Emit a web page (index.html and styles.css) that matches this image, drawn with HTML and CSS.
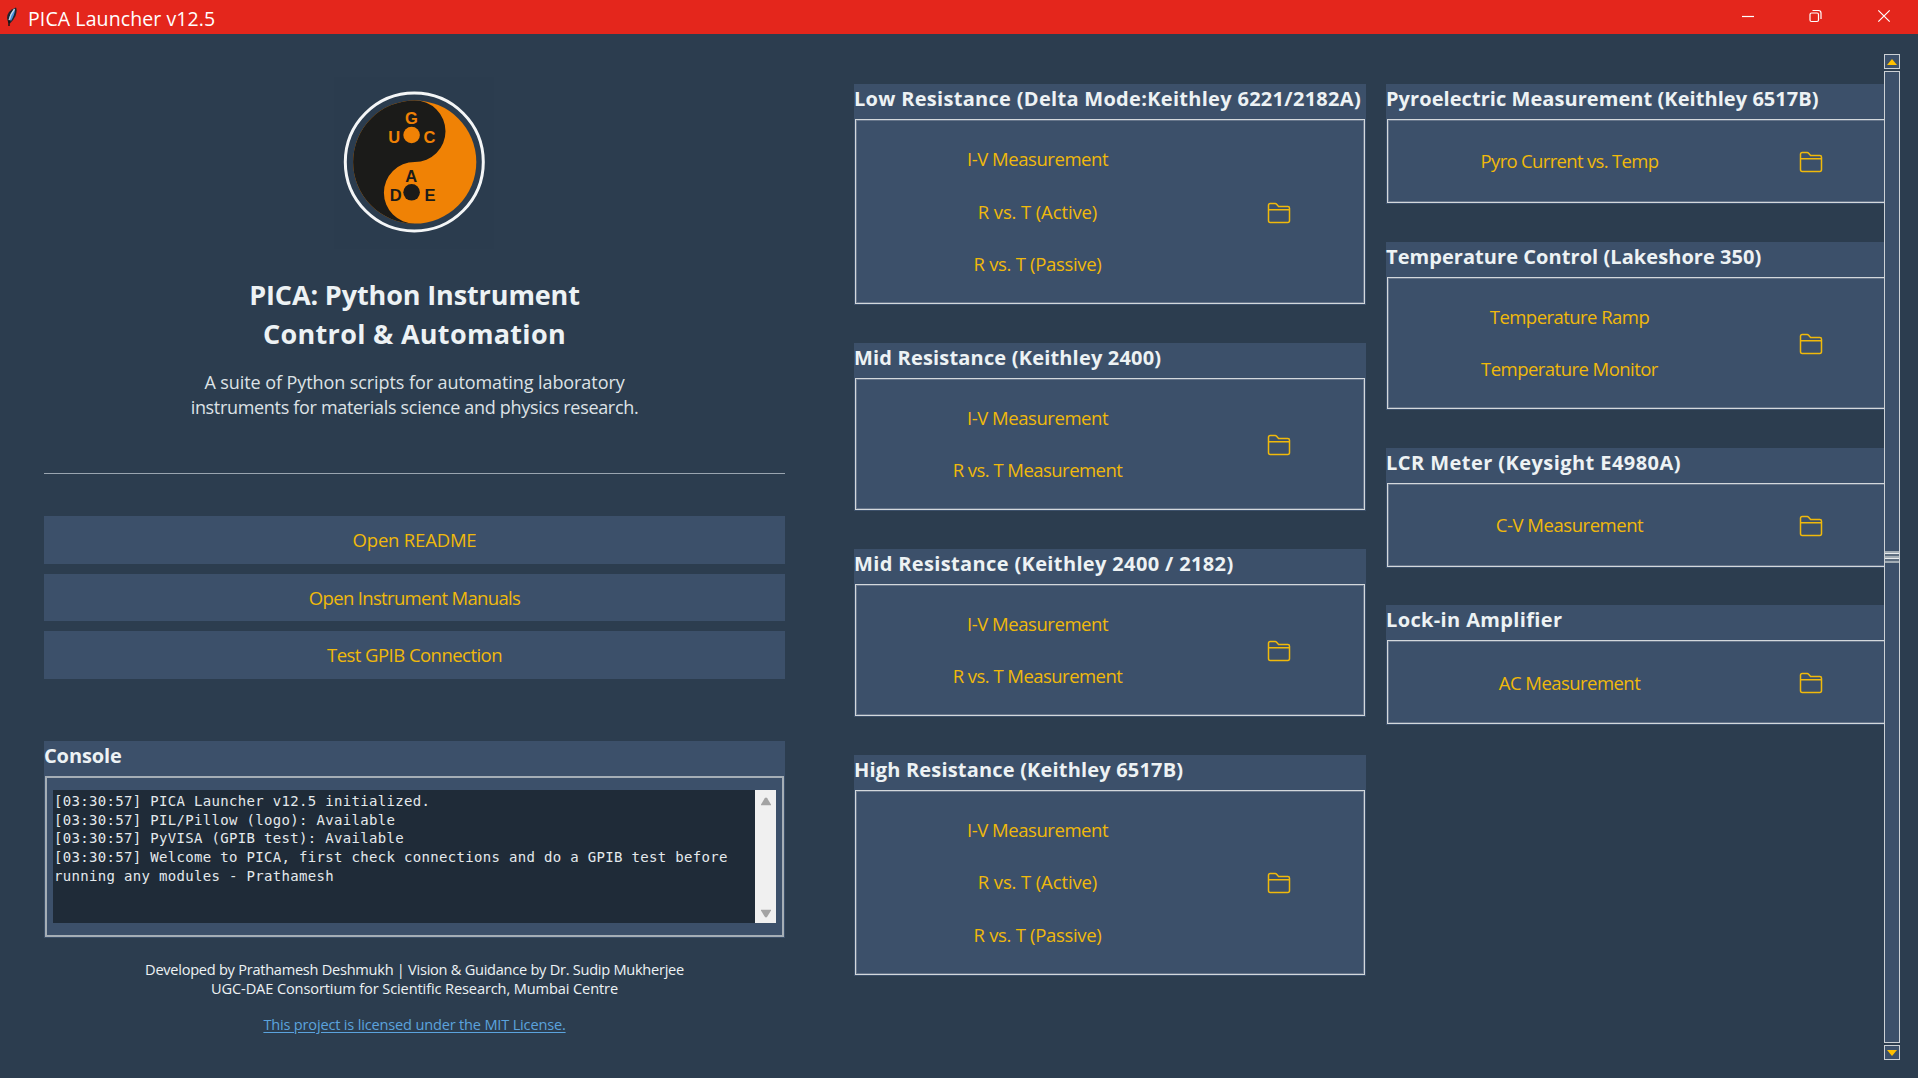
FILE: index.html
```html
<!DOCTYPE html>
<html lang="en">
<head>
<meta charset="utf-8">
<title>PICA Launcher v12.5</title>
<link rel="stylesheet" href="styles.css">
</head>
<body>
<svg class="symbols" width="0" height="0" aria-hidden="true">
  <symbol id="folder" viewBox="0 0 24 22">
    <path d="M1.5 18.5V3.2Q1.5 1.5 3.2 1.5H8.2Q9 1.5 9.6 2.2L11.6 4.5H20.8Q22.5 4.5 22.5 6.2V18.5Q22.5 20.5 20.8 20.5H3.2Q1.5 20.5 1.5 18.5ZM1.5 7.8H22.5" fill="none" stroke="currentColor" stroke-width="1.5"/>
  </symbol>
</svg>
<header class="titlebar">
  <svg class="feather" width="12" height="20" viewBox="0 0 12 20"><path d="M10 .5Q11.500 3 9.500 9Q7.500 13 4 16.500L2.500 16Q-.5 10 3 5Q6 1.500 10 .5Z" fill="#1d2530"/><path d="M9 2Q9 7 5 14L3.500 12Q3 7 9 2Z" fill="#4a90d9"/><path d="M8.500 2Q4.500 7 3 13.500" fill="none" stroke="#c4d8e8" stroke-width="1.300"/><path d="M3 13V19" stroke="#111" stroke-width="1.400"/></svg>
  <h1 class="app-name">PICA Launcher v12.5</h1>
  <div class="window-controls">
    <svg width="14" height="14" viewBox="0 0 14 14"><path d="M1 7.500H13"/></svg>
    <svg width="14" height="14" viewBox="0 0 14 14"><rect x="1" y="4" width="8.500" height="8.500" rx="1.500"/><path d="M3.500 1.500H9.500Q12 1.500 12 4V10"/></svg>
    <svg width="14" height="14" viewBox="0 0 14 14"><path d="M1.300 1.300L12.700 12.700M12.700 1.300L1.300 12.700"/></svg>
  </div>
</header>
<main class="workspace">
  <section class="info">
    <svg class="logo" width="160" height="172" viewBox="0 0 160 172">
      <rect width="160" height="172" fill="#2b3c4e"/>
      <circle cx="80.300" cy="85" r="69" fill="none" stroke="#f4f6f7" stroke-width="3"/>
      <circle cx="80.700" cy="85" r="61.600" fill="#f08205"/>
      <path d="M80.700 23.400A30.800 30.800 0 0 1 80.700 85A30.800 30.800 0 0 0 80.700 146.600A61.600 61.600 0 0 1 80.700 23.400Z" fill="#1b1b19"/>
      <circle cx="77.600" cy="58" r="8.300" fill="#f08205"/>
      <circle cx="77.600" cy="115.300" r="8.300" fill="#1b1b19"/>
      <g class="logo-text" fill="#f08205"><text x="77.300" y="46.500">G</text><text x="60.300" y="65.500">U</text><text x="95.500" y="65.500">C</text></g>
      <g class="logo-text" fill="#1b1b19"><text x="77.300" y="105">A</text><text x="61.700" y="123.500">D</text><text x="96" y="123.500">E</text></g>
    </svg>
    <h2 class="title"><span class="tight-1">PICA: Python Instrument</span><br><span class="wide-3">Control &amp; Automation</span></h2>
    <p class="tagline"><span class="tight-0">A suite of Python scripts for automating laboratory</span><br><span class="tight-3">instruments for materials science and physics research.</span></p>
    <hr class="divider">
    <nav class="actions">
      <button class="action tight-2">Open README</button>
      <button class="action tight-6">Open Instrument Manuals</button>
      <button class="action tight-5">Test GPIB Connection</button>
    </nav>
    <section class="group console">
      <h3 class="group-title tight-1">Console</h3>
      <div class="console-frame">
        <pre class="log">[03:30:57] PICA Launcher v12.5 initialized.
[03:30:57] PIL/Pillow (logo): Available
[03:30:57] PyVISA (GPIB test): Available
[03:30:57] Welcome to PICA, first check connections and do a GPIB test before
running any modules - Prathamesh</pre>
        <div class="log-scroll">
          <svg width="12" height="9" viewBox="0 0 12 9"><path d="M4.800 1.300Q6-.2 7.200 1.300L11 7.500V8.300H1V7.500Z"/></svg>
          <svg width="12" height="9" viewBox="0 0 12 9"><path d="M4.800 7.700Q6 9.200 7.200 7.700L11 1.500V.7H1V1.500Z"/></svg>
        </div>
      </div>
    </section>
    <footer class="credits">
      <p class="credit"><span class="tight-2b">Developed by Prathamesh Deshmukh | Vision &amp; Guidance by Dr. Sudip Mukherjee</span><br><span class="tight-1">UGC-DAE Consortium for Scientific Research, Mumbai Centre</span></p>
      <a class="license tight-2" href="#">This project is licensed under the MIT License.</a>
    </footer>
  </section>
  <section class="suites">
    <div class="column">
      <section class="group triple"><h3 class="group-title wide-3">Low Resistance (Delta Mode:Keithley 6221/2182A)</h3>
        <div class="frame"><div class="items"><span class="tight-4">I-V Measurement</span><span class="tight-1">R vs. T (Active)</span><span class="tight-3">R vs. T (Passive)</span></div><svg class="folder"><use href="#folder"/></svg></div></section>
      <section class="group double"><h3 class="group-title wide-2">Mid Resistance (Keithley 2400)</h3>
        <div class="frame"><div class="items"><span class="tight-4">I-V Measurement</span><span class="tight-5">R vs. T Measurement</span></div><svg class="folder"><use href="#folder"/></svg></div></section>
      <section class="group double"><h3 class="group-title wide-4">Mid Resistance (Keithley 2400 / 2182)</h3>
        <div class="frame"><div class="items"><span class="tight-4">I-V Measurement</span><span class="tight-5">R vs. T Measurement</span></div><svg class="folder"><use href="#folder"/></svg></div></section>
      <section class="group triple"><h3 class="group-title wide-2">High Resistance (Keithley 6517B)</h3>
        <div class="frame"><div class="items"><span class="tight-4">I-V Measurement</span><span class="tight-1">R vs. T (Active)</span><span class="tight-3">R vs. T (Passive)</span></div><svg class="folder"><use href="#folder"/></svg></div></section>
    </div>
    <div class="column">
      <section class="group single"><h3 class="group-title wide-1">Pyroelectric Measurement (Keithley 6517B)</h3>
        <div class="frame"><div class="items"><span class="tight-6">Pyro Current vs. Temp</span></div><svg class="folder"><use href="#folder"/></svg></div></section>
      <section class="group double"><h3 class="group-title wide-1">Temperature Control (Lakeshore 350)</h3>
        <div class="frame"><div class="items"><span class="tight-5">Temperature Ramp</span><span class="tight-5">Temperature Monitor</span></div><svg class="folder"><use href="#folder"/></svg></div></section>
      <section class="group single"><h3 class="group-title wide-5">LCR Meter (Keysight E4980A)</h3>
        <div class="frame"><div class="items"><span class="tight-4">C-V Measurement</span></div><svg class="folder"><use href="#folder"/></svg></div></section>
      <section class="group single"><h3 class="group-title wide-4">Lock-in Amplifier</h3>
        <div class="frame"><div class="items"><span class="tight-5">AC Measurement</span></div><svg class="folder"><use href="#folder"/></svg></div></section>
    </div>
  </section>
  <div class="scrollbar">
    <div class="arrow"><svg width="10" height="6" viewBox="0 0 10 6"><path d="M5 0L10 6H0Z"/></svg></div>
    <div class="thumb"><div class="grip"></div></div>
    <div class="arrow"><svg width="10" height="6" viewBox="0 0 10 6"><path d="M0 0H10L5 6Z"/></svg></div>
  </div>
</main>
</body>
</html>
```
FILE: styles.css
```css
* { box-sizing: border-box; }
body {
  margin: 0;
  width: 1918px;
  height: 1078px;
  overflow: hidden;
  display: flex;
  flex-direction: column;
  background: #2c3d4f;
  color: #edf2f4;
  font-family: "Open Sans", "Noto Sans", sans-serif;
}
h1, h2, h3, p { margin: 0; }
.symbols { position: absolute; }

/* letter tracking */
.tight-0 { letter-spacing: -0.08px; }
.tight-1 { letter-spacing: -0.12px; }
.tight-2 { letter-spacing: -0.19px; }
.tight-2b { letter-spacing: -0.27px; }
.tight-3 { letter-spacing: -0.32px; }
.tight-4 { letter-spacing: -0.45px; }
.tight-5 { letter-spacing: -0.54px; }
.tight-6 { letter-spacing: -0.67px; }
.wide-1 { letter-spacing: 0.06px; }
.wide-2 { letter-spacing: 0.18px; }
.wide-3 { letter-spacing: 0.3px; }
.wide-4 { letter-spacing: 0.36px; }
.wide-5 { letter-spacing: 0.44px; }

.titlebar {
  height: 34px;
  flex: none;
  display: flex;
  align-items: center;
  padding: 0 27px 0 6px;
  background: #e4261c;
  color: #fff;
}
.feather { margin-right: 10px; }
.app-name { font-size: 19.5px; font-weight: 400; line-height: 34px; padding-top: 3px; letter-spacing: 0.1px; }
.window-controls { display: flex; gap: 54px; margin-left: auto; margin-top: -2px; }
.window-controls svg { fill: none; stroke: #fff; stroke-width: 1.2; }

.workspace { flex: 1; display: flex; min-height: 0; padding-left: 44px; }
.info { width: 741px; flex: none; display: flex; flex-direction: column; align-items: center; padding-top: 43px; }
.logo { display: block; margin-right: 2px; }
.logo-text { font: bold 16.5px "Liberation Sans", sans-serif; text-anchor: middle; }
.title { margin-top: 27px; font-size: 27px; line-height: 38.5px; font-weight: 700; text-align: center; }
.tagline { margin-top: 17px; font-size: 18px; line-height: 25px; text-align: center; color: #dde2e6; }
.divider { width: 100%; height: 1px; margin: 53px 0 42px; border: 0; background: #9aa5b0; }
.actions { width: 100%; display: flex; flex-direction: column; gap: 10px; }
.action {
  height: 47.6px;
  padding: 0;
  border: 0;
  background: #3c506a;
  color: #f0b90b;
  font-family: inherit;
  font-size: 18.5px;
}
.group { background: #3c506a; display: flex; flex-direction: column; padding: 0 1px 1px; }
.group-title { flex: none; height: 35px; font-size: 20px; line-height: 30px; font-weight: 700; white-space: nowrap; margin-left: -1px; }
.console { width: 100%; height: 197px; margin-top: 62px; }
.console-frame { flex: 1; min-height: 0; display: flex; border: 2px solid #a5aeb6; padding: 12px 6px 12px 6px; }
.log {
  flex: 1;
  margin: 0;
  padding: 2px 1px;
  background: #1f2b38;
  color: #e4e9ec;
  font: 14px/18.75px "DejaVu Sans Mono", monospace;
  letter-spacing: 0.32px;
}
.log-scroll { width: 21px; background: #f0f0f0; display: flex; flex-direction: column; justify-content: space-between; align-items: center; padding: 7px 0 5px; fill: #a3a3a3; }
.credits { display: flex; flex-direction: column; align-items: center; text-align: center; }
.credit { margin-top: 22px; font-size: 14.6px; line-height: 19px; }
.license { margin-top: 16px; font-size: 14.6px; line-height: 20px; color: #5ba3dd; text-underline-offset: 2px; }

.suites { width: 1030px; margin-left: 69px; display: flex; gap: 20px; overflow: hidden; padding-top: 50px; }
.column { width: 512px; flex: none; display: flex; flex-direction: column; gap: 37.7px; }
.column .group { padding-bottom: 0; border-bottom: 1px solid #3c506a; }
.triple { height: 221px; }
.double { height: 168.3px; }
.single { height: 120px; }
.frame { flex: 1; display: flex; align-items: center; border: 1px solid #d3d8dc; box-shadow: inset 0 0 0 1px #66758a; }
.items { width: 363px; display: flex; flex-direction: column; align-items: center; color: #f0b90b; font-size: 18.5px; line-height: 52.5px; padding-top: 1px; }
.folder { width: 24px; height: 22px; margin: 2px 0 0 48px; color: #f0b90b; }

.scrollbar { width: 16px; margin-top: 20px; display: flex; flex-direction: column; gap: 2px; height: 1006px; }
.arrow { height: 15px; flex: none; display: flex; align-items: center; justify-content: center; border: 1px solid #ccd1d5; background: #3c506a; fill: #ffc000; }
.thumb { flex: 1; display: flex; flex-direction: column; justify-content: center; border: 1px solid #ccd1d5; background: #3c506a; }
.grip { height: 12px; background: repeating-linear-gradient(#a3adb5 0 2px, #e8ebed 2px 3px, #5c6c7e 3px 5px); }
```
